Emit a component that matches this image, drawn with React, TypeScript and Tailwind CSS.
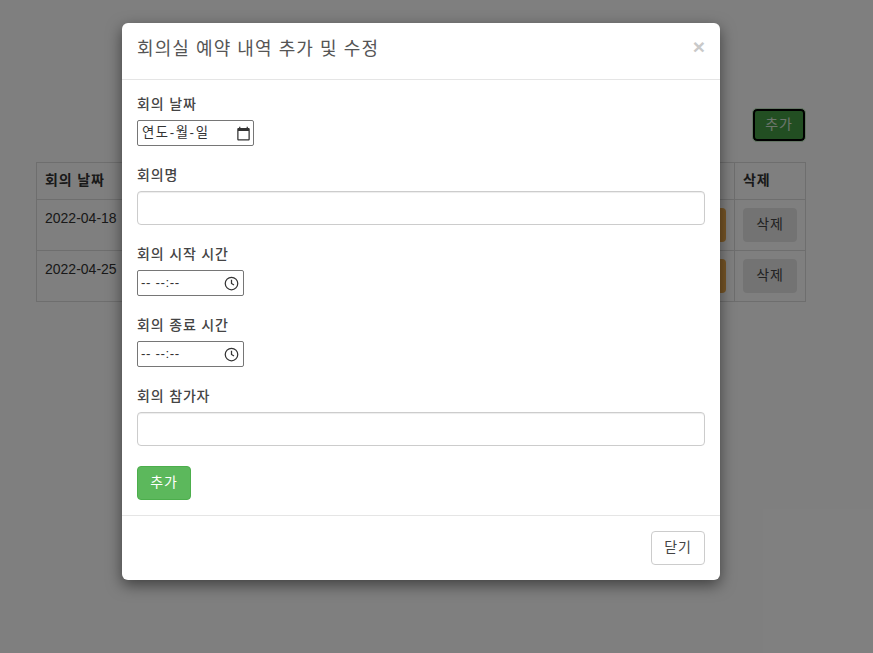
import React from 'react';

const font = 'font-["Liberation_Sans","Noto_Sans_CJK_KR",sans-serif]';

const rows = ['2022-04-18', '2022-04-25'];

const CalendarIcon = () => (
  <svg width="15" height="15" viewBox="0 0 24 24" fill="currentColor">
    <path d="M20 3h-1V1h-2v2H7V1H5v2H4c-1.1 0-2 .9-2 2v16c0 1.1.9 2 2 2h16c1.1 0 2-.9 2-2V5c0-1.1-.9-2-2-2zm0 18H4V8h16v13z" />
  </svg>
);

const ClockIcon = () => (
  <svg width="15" height="15" viewBox="0 0 24 24" fill="none" stroke="currentColor" strokeWidth="2">
    <circle cx="12" cy="12" r="10" />
    <path d="M12 6v6l4 2.5" />
  </svg>
);

const DateField = () => (
  <div className="flex h-[26px] w-[117px] items-center justify-between rounded-[2px] border border-[#767676] pl-[4px] pr-[2px] text-[13.33px] tracking-[1.6px] text-[#333]">
    <span>연도-월-일</span>
    <CalendarIcon />
  </div>
);

const TimeField = () => (
  <div className="flex h-[26px] w-[107px] items-center justify-between rounded-[2px] border border-[#767676] pl-[3px] pr-[4px] text-[13.33px] tracking-[0.6px] text-[#333]">
    <span>-- --:--</span>
    <ClockIcon />
  </div>
);

const Label = ({ children }: { children: React.ReactNode }) => (
  <div className="mb-[5px] h-[20px] text-[14px] leading-[18px] font-medium tracking-[0.06em] text-[#444]">{children}</div>
);

const TextField = () => (
  <div className="h-[34px] rounded-[4px] border border-[#ccc] bg-white shadow-[inset_0_1px_1px_rgba(0,0,0,0.075)]" />
);

export default function App() {
  return (
    <div className={`${font} relative h-[653px] w-full overflow-hidden bg-white text-[14px] text-[#333]`}>
      {/* page behind the modal */}
      <div className="pl-[36px] pt-[108px]">
        <div className="w-[770px] flex justify-end">
          <button className="h-[34px] w-[54px] rounded-[5px] border border-[#c8e8c8] bg-[#449d44] pb-[2px] tracking-[0.06em] text-white/80 shadow-[inset_0_0_0_2px_#000]">
            추가
          </button>
        </div>
        <table className="mt-[20px] w-[770px] table-fixed border-collapse">
          <thead>
            <tr className="h-[37px]">
              <th className="w-[90px] border border-[#ddd] px-[8px] pb-[2px] text-left font-semibold tracking-[0.06em]">회의 날짜</th>
              <th className="border border-[#ddd]" />
              <th className="w-[71px] border border-[#ddd] px-[8px] pb-[2px] text-left font-semibold tracking-[0.06em]">삭제</th>
            </tr>
          </thead>
          <tbody>
            {rows.map((date) => (
              <tr key={date} className="h-[51px]">
                <td className="border border-[#ddd] px-[8px] pb-[14px] align-middle">{date}</td>
                <td className="border border-[#ddd] pr-[8px] text-right">
                  <button className="h-[34px] w-[54px] rounded-[4px] bg-[#f0ad4e] align-middle text-white">수정</button>
                </td>
                <td className="border border-[#ddd] px-[8px]">
                  <button className="h-[34px] w-[54px] rounded-[4px] bg-[#e7e7e7] pb-[2px] align-middle tracking-[0.06em] text-[#444]">삭제</button>
                </td>
              </tr>
            ))}
          </tbody>
        </table>
      </div>

      {/* backdrop + modal */}
      <div className="absolute inset-0 bg-black/50 pl-[122px] pt-[23px]">
        <div className="h-[557px] w-[598px] rounded-[6px] bg-white shadow-[0_5px_15px_rgba(0,0,0,0.5)]">
          <div className="flex h-[57px] items-start justify-between border-b border-[#e5e5e5] px-[15px] pt-[13px]">
            <h4 className="text-[18px] leading-[26px] tracking-[0.06em] text-[#555]">회의실 예약 내역 추가 및 수정</h4>
            <span className="text-[21px] leading-[21px] font-bold text-[#c9c9c9]">×</span>
          </div>
          <div className="h-[436px] border-b border-[#e5e5e5] px-[15px] pt-[15px]">
            <Label>회의 날짜</Label>
            <DateField />
            <div className="mt-[20px]">
              <Label>회의명</Label>
              <TextField />
            </div>
            <div className="mt-[20px]">
              <Label>회의 시작 시간</Label>
              <TimeField />
            </div>
            <div className="mt-[20px]">
              <Label>회의 종료 시간</Label>
              <TimeField />
            </div>
            <div className="mt-[20px]">
              <Label>회의 참가자</Label>
              <TextField />
            </div>
            <button className="mt-[20px] h-[34px] w-[54px] rounded-[4px] border border-[#4cae4c] bg-[#5cb85c] pb-[2px] tracking-[0.06em] text-white">
              추가
            </button>
          </div>
          <div className="flex justify-end px-[15px] pt-[15px]">
            <button className="h-[34px] w-[54px] rounded-[4px] border border-[#ccc] bg-white pb-[2px] tracking-[0.06em] text-[#444]">닫기</button>
          </div>
        </div>
      </div>
    </div>
  );
}
